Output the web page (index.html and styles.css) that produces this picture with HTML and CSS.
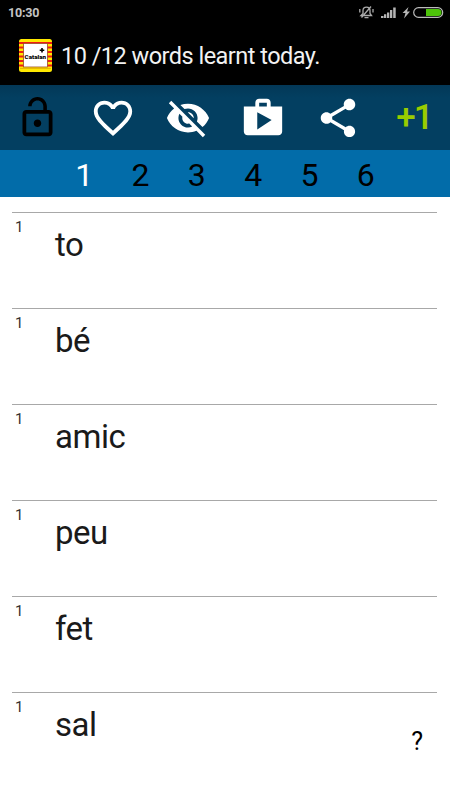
FILE: index.html
```
<!DOCTYPE html>
<html lang="en">
  <head>
    <meta charset="utf-8">
    <title>Learn Catalan</title>
    <meta name="viewport" content="width=device-width,initial-scale=1">
    <link rel="stylesheet" href="styles.css">
  </head>
  <body>
    <div class="status-bar">
      <span class="clock">10:30</span>
      <svg class="status-icons" width="86" height="18" viewBox="0 0 86 18">
        <g fill="none" stroke="#aaa" stroke-width="1.3">
          <path d="M2 11.500h10.500l-1.500-2V6.500c0-4.500-7-4.500-7 0v3zM5.500 13.700h4M2.500 13.500L12 2.500M.8 5v3.500M14 5v3.500"/>
        </g>
        <g fill="#b5b5b5">
          <path d="M22 12h2.500v2H22zM25 10.300h2.300v3.700H25zM28 8.500h2.300V14H28zM31 6h2.300v8H31zM34.200 3.500h2.500V14h-2.500z"/>
          <path d="M49.500 3l-6 6h3l-1.500 5.500 6-7h-3z"/>
        </g>
        <rect x="54.700" y="3.700" width="29" height="9.600" rx="4.800" fill="#000" stroke="#bbb" stroke-width="1.200"/>
        <path d="M67 5h12a3.500 3.500 0 0 1 0 7H67z" fill="#4dc30a"/>
      </svg>
    </div>
    <div class="title-bar">
      <svg class="app-icon" width="33" height="33" viewBox="0 0 33 33">
        <rect width="33" height="33" rx="2.500" fill="#ffe800"/>
        <path d="M0 4h33M0 8.500h33M0 13h33M0 17.500h33M0 22h33M0 26.500h33" stroke="#ef1c14" stroke-width="2.200"/>
        <path d="M1 29.500h31" stroke="#e8b800" stroke-width="1"/>
        <rect x="4.500" y="4.500" width="24" height="23.500" fill="#fff" stroke="#9b4a20" stroke-width=".8"/>
        <path d="M23 8.900v4.600M20.700 11.200h4.600" stroke="#000" stroke-width="1.600"/>
        <text x="5.600" y="19.500" class="app-name" textLength="21.500" lengthAdjust="spacingAndGlyphs">Catalan</text>
      </svg>
      <span class="title">10 /12 words learnt today.</span>
    </div>
    <div class="toolbar">
      <div class="tool tool-lock">
        <svg class="icon" viewBox="0 0 24 24"><path d="M12 17c1.100 0 2-.9 2-2s-.9-2-2-2-2 .9-2 2 .9 2 2 2zm6-9h-1V6c0-2.760-2.240-5-5-5S7 3.240 7 6h1.900c0-1.710 1.390-3.100 3.100-3.100 1.710 0 3.100 1.390 3.100 3.100v2H6c-1.100 0-2 .9-2 2v10c0 1.100.9 2 2 2h12c1.100 0 2-.9 2-2V10c0-1.100-.9-2-2-2zm0 12H6V10h12v10z"/></svg>
      </div>
      <div class="tool">
        <svg class="icon" viewBox="0 0 24 24"><path d="M16.500 3c-1.740 0-3.410.81-4.500 2.090C10.910 3.810 9.240 3 7.500 3 4.420 3 2 5.420 2 8.500c0 3.780 3.400 6.860 8.550 11.540L12 21.350l1.450-1.320C18.600 15.360 22 12.280 22 8.500 22 5.420 19.580 3 16.500 3zm-4.400 15.550l-.1.100-.1-.1C7.140 14.240 4 11.390 4 8.500 4 6.500 5.500 5 7.500 5c1.540 0 3.040.99 3.570 2.360h1.870C13.460 5.990 14.960 5 16.500 5c2 0 3.500 1.500 3.500 3.500 0 2.890-3.140 5.740-7.900 10.050z"/></svg>
      </div>
      <div class="tool">
        <svg class="icon" viewBox="0 0 24 24"><path d="M12 7c2.760 0 5 2.240 5 5 0 .65-.13 1.260-.36 1.830l2.920 2.920c1.510-1.260 2.700-2.890 3.430-4.750-1.730-4.390-6-7.500-11-7.500-1.400 0-2.740.25-3.980.7l2.160 2.160C10.740 7.130 11.350 7 12 7zM2 4.270l2.280 2.280.46.46C3.080 8.300 1.780 10.020 1 12c1.730 4.390 6 7.500 11 7.500 1.550 0 3.030-.3 4.380-.84l.42.42L19.730 22 21 20.730 3.270 3 2 4.270zM7.530 9.800l1.550 1.550c-.05.21-.08.43-.08.65 0 1.660 1.340 3 3 3 .22 0 .44-.03.65-.08l1.550 1.550c-.67.33-1.410.53-2.200.53-2.760 0-5-2.240-5-5 0-.79.2-1.530.53-2.200zm4.310-.78l3.150 3.150.02-.16c0-1.660-1.340-3-3-3l-.17.01z"/></svg>
      </div>
      <div class="tool">
        <svg class="icon" viewBox="0 0 24 24"><path d="M16 6V4c0-1.110-.89-2-2-2h-4c-1.110 0-2 .89-2 2v2H2v13c0 1.110.89 2 2 2h16c1.110 0 2-.89 2-2V6h-6zm-6-2h4v2h-4V4zM9 18V9l7.500 4L9 18z"/></svg>
      </div>
      <div class="tool">
        <svg class="icon" viewBox="0 0 24 24"><path d="M18 16.080c-.76 0-1.440.3-1.960.77L8.910 12.700c.05-.23.09-.46.09-.7s-.04-.47-.09-.7l7.050-4.110c.54.5 1.250.81 2.040.81 1.660 0 3-1.340 3-3s-1.340-3-3-3-3 1.340-3 3c0 .24.04.47.09.7L8.040 9.810C7.500 9.310 6.790 9 6 9c-1.660 0-3 1.340-3 3s1.340 3 3 3c.79 0 1.500-.31 2.040-.81l7.120 4.160c-.05.21-.08.43-.08.65 0 1.610 1.310 2.920 2.920 2.920s2.920-1.310 2.920-2.920-1.310-2.920-2.920-2.920z"/></svg>
      </div>
      <div class="tool plus-one">+1</div>
    </div>
    <div class="pages">
      <span class="page active">1</span>
      <span class="page">2</span>
      <span class="page">3</span>
      <span class="page">4</span>
      <span class="page">5</span>
      <span class="page">6</span>
    </div>
    <div class="words">
      <div class="row"><span class="level">1</span><span class="word">to</span></div>
      <div class="row"><span class="level">1</span><span class="word">bé</span></div>
      <div class="row"><span class="level">1</span><span class="word">amic</span></div>
      <div class="row"><span class="level">1</span><span class="word">peu</span></div>
      <div class="row"><span class="level">1</span><span class="word">fet</span></div>
      <div class="row"><span class="level">1</span><span class="word">sal</span><span class="help">?</span></div>
    </div>
  </body>
</html>
```
FILE: styles.css
```
body {
  margin: 0;
  height: 800px;
  overflow: hidden;
  background: white;
  color: #1a1a1a;
  font-family: Roboto, sans-serif;
}

.status-bar {
  display: flex;
  justify-content: space-between;
  height: 25px;
  padding: 4px 5px 0 8px;
  box-sizing: border-box;
  background: black;
}

.clock {
  color: #c4c4c4;
  font-size: 12.5px;
  font-weight: 700;
  letter-spacing: -0.2px;
  line-height: 18px;
}

.title-bar {
  display: flex;
  align-items: center;
  height: 60px;
  padding-left: 19px;
  background: black;
}

.app-name {
  font-size: 6px;
  font-weight: 900;
}

.title {
  margin: 2px 0 0 9px;
  color: #f2f2f2;
  font-size: 23.5px;
  letter-spacing: -0.52px;
}

.toolbar {
  display: grid;
  grid-template-columns: repeat(6, 1fr);
  height: 65px;
  background: linear-gradient(#033857, #033f61 20%);
}

.tool {
  display: flex;
  align-items: center;
  justify-content: center;
  color: white;
}

.tool-lock {
  color: black;
}

.icon {
  width: 46px;
  height: 46px;
  fill: currentColor;
}

.tool-lock .icon {
  width: 45px;
  height: 45px;
}

.plus-one {
  padding-left: 3px;
  color: #99cc00;
  font-size: 35px;
  font-weight: 500;
  letter-spacing: -2px;
}

.pages {
  display: flex;
  justify-content: center;
  height: 47px;
  background: #026ca9;
}

.page {
  width: 56.3px;
  color: black;
  font-size: 32px;
  line-height: 50px;
  text-align: center;
}

.page.active {
  color: white;
}

.words {
  padding: 15px 13px 0 12px;
}

.row {
  display: flex;
  height: 96px;
  box-sizing: border-box;
  border-top: 1px solid #a8a8a8;
}

.level {
  width: 43px;
  padding: 5px 0 0 3px;
  box-sizing: border-box;
  color: #333;
  font-size: 15px;
  line-height: 18px;
}

.word {
  flex: 1;
  font-size: 33px;
  letter-spacing: -0.5px;
  line-height: 64px;
}

.help {
  padding: 35px 14px 0 0;
  color: black;
  font-size: 25px;
  line-height: 28px;
}
```
